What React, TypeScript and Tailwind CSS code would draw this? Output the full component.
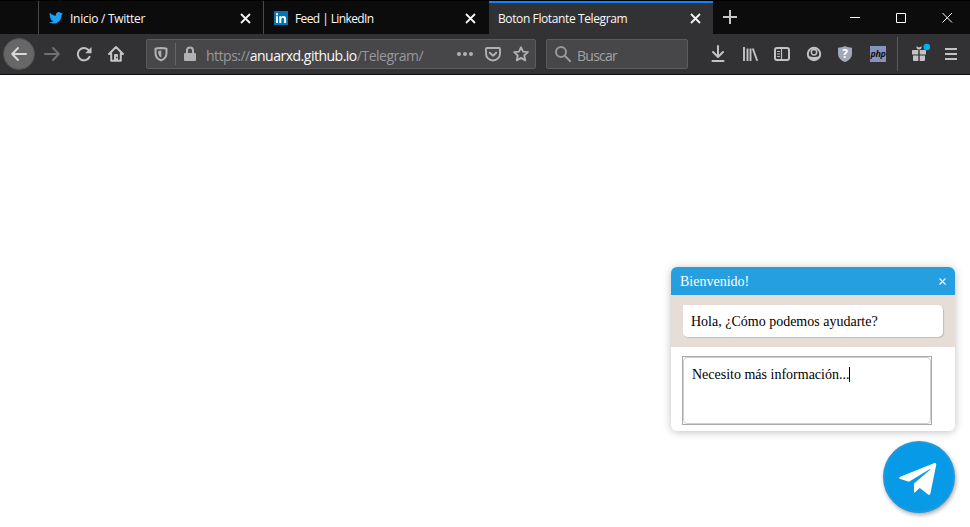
import type { ReactNode } from "react";

const CloseX = () => (
  <svg className="h-[11px] w-[11px] shrink-0" viewBox="0 0 11 11" fill="none" stroke="#f4f4f4" strokeWidth="1.8">
    <path d="M1 1 10 10M10 1 1 10" />
  </svg>
);

const Slot = ({ children }: { children: ReactNode }) => (
  <div className="flex h-8 w-8 shrink-0 items-center justify-center">{children}</div>
);

const Icon = ({ children, color = "#c3c3c3" }: { children: ReactNode; color?: string }) => (
  <svg
    className="h-4 w-4 shrink-0 overflow-visible"
    viewBox="0 0 16 16"
    fill="none"
    stroke={color}
    strokeWidth="2"
    strokeLinecap="round"
    strokeLinejoin="round"
  >
    {children}
  </svg>
);

function TabStrip() {
  return (
    <div className="flex h-[34px] border-t border-black bg-[#0c0c0d] text-[12px] text-[#f9f9fa]">
      <div className="w-[38px] shrink-0" />
      <div className="flex w-[225px] shrink-0 items-center border-l border-[#4a4a4b] pt-px pl-[10px] pr-[12px]">
        <svg className="h-[14px] w-[14px] shrink-0" viewBox="0 2 24 20.5" fill="#1da1f2">
          <path d="M23.954 4.569a10 10 0 0 1-2.825.775 4.958 4.958 0 0 0 2.163-2.723c-.951.555-2.005.959-3.127 1.184a4.92 4.92 0 0 0-8.384 4.482C7.691 8.094 4.066 6.13 1.64 3.161a4.822 4.822 0 0 0-.666 2.475c0 1.71.87 3.213 2.188 4.096a4.904 4.904 0 0 1-2.228-.616v.061a4.923 4.923 0 0 0 3.946 4.827 4.996 4.996 0 0 1-2.212.085 4.937 4.937 0 0 0 4.604 3.417 9.868 9.868 0 0 1-6.102 2.105c-.39 0-.779-.023-1.17-.067a13.995 13.995 0 0 0 7.557 2.209c9.054 0 13.999-7.496 13.999-13.986 0-.209 0-.42-.015-.63a9.936 9.936 0 0 0 2.46-2.548z" />
        </svg>
        <span className="ml-[7px] flex-1 whitespace-nowrap pt-[2px] tracking-[-0.27px]">Inicio / Twitter</span>
        <CloseX />
      </div>
      <div className="flex w-[226px] shrink-0 items-center border-l border-[#4a4a4b] pt-px pl-[10px] pr-[13px]">
        <svg className="h-[14px] w-[14px] shrink-0" viewBox="0 0 14 14">
          <rect width="14" height="14" fill="#0077b5" />
          <path d="M2 5.3h2V12H2zM2 2.2h2v2H2zM5.3 5.3h2v.9c.5-.8 1.2-1.1 2.2-1.1 1.9 0 2.6 1.2 2.6 3.1V12h-2V8.6c0-1.1-.3-1.8-1.3-1.8S7.3 7.6 7.3 8.6V12h-2z" fill="#fff" />
        </svg>
        <span className="ml-[7px] flex-1 whitespace-nowrap pt-[2px] tracking-[-0.6px]">Feed | LinkedIn</span>
        <CloseX />
      </div>
      <div className="flex w-[224px] shrink-0 items-center border-t-2 border-[#0a84ff] bg-[#323234] pl-[9px] pr-[12px]">
        <span className="flex-1 whitespace-nowrap pt-px tracking-[-0.39px]">Boton Flotante Telegram</span>
        <CloseX />
      </div>
      <div className="flex w-[34px] items-center justify-center pb-px">
        <svg className="h-[14px] w-[14px]" viewBox="0 0 14 14" stroke="#c8c8c8" strokeWidth="2">
          <path d="M7 0v14M0 7h14" />
        </svg>
      </div>
      <div className="ml-auto flex items-center">
        <div className="flex w-[46px] justify-center">
          <svg className="h-[11px] w-[11px]" viewBox="0 0 11 11"><path d="M0 5.500h10" stroke="#fff" /></svg>
        </div>
        <div className="flex w-[46px] justify-center">
          <svg className="h-[11px] w-[11px]" viewBox="0 0 11 11"><path d="M.5 1.500h9v9h-9z" fill="none" stroke="#fff" /></svg>
        </div>
        <div className="flex w-[46px] justify-center">
          <svg className="h-[11px] w-[11px]" viewBox="0 0 11 11"><path d="m.5 1 9.500 9.500M10 1 .5 10.500" stroke="#fff" /></svg>
        </div>
      </div>
    </div>
  );
}

function UrlBar() {
  return (
    <div className="ml-[14px] flex h-[30px] w-[390px] shrink-0 items-center rounded-[2px] border border-[#5b5b5d] bg-[#474749] pl-[6px]">
      <Icon color="#b1b1b3">
        <path d="M8 2C6 2.100 3.900 2.300 2.500 2.800V7c0 3.300 2.200 6.300 5.500 7.300C11.300 13.300 13.500 10.300 13.500 7V2.800C12.100 2.300 10 2.100 8 2Z" />
        <path d="M8.300 4.600v7C6.300 10.600 5.200 8.800 5.200 6.500V5Z" fill="#b1b1b3" stroke="none" />
      </Icon>
      <div className="ml-[6px] h-[22px] w-px bg-[#66666a]" />
      <div className="ml-[6px] flex">
        <Icon color="#b1b1b3">
          <rect x="2" y="7" width="12" height="8" rx="1" fill="#b1b1b3" stroke="none" />
          <path d="M5 8V4.500a3 3 0 0 1 6 0V8" />
        </Icon>
      </div>
      <span className="ml-[8px] w-[242px] whitespace-nowrap pt-[2px] text-[14px] tracking-[-0.5px] text-[#98989a]">
        https://<span className="text-[#f9f9fa]">anuarxd.github.io</span>/Telegram/
      </span>
      <div className="flex w-[81px] justify-between pl-[9px]">
        <Icon color="#b1b1b3">
          <g fill="#b1b1b3" stroke="none">
            <circle cx="2" cy="8" r="2" /><circle cx="8" cy="8" r="2" /><circle cx="14" cy="8" r="2" />
          </g>
        </Icon>
        <Icon color="#b1b1b3">
          <path d="M1.900 2h12.200a.9.9 0 0 1 .9.900V7.500a7 7 0 0 1-14 0V2.900A.9.9 0 0 1 1.900 2Z" strokeWidth="1.900" />
          <path d="m4.800 6.700 3.200 3 3.200-3" strokeWidth="1.900" />
        </Icon>
        <Icon color="#b1b1b3">
          <path d="m8 1.200 2 4.500 4.900.5-3.700 3.300 1.100 4.900L8 11.900l-4.300 2.500 1.100-4.900-3.700-3.300 4.900-.5Z" strokeWidth="1.800" />
        </Icon>
      </div>
    </div>
  );
}

function Toolbar() {
  return (
    <div className="flex h-[41px] items-center border-b border-[#0c0c0d] bg-[#323234] pl-[3px]">
      <div className="flex h-8 w-8 shrink-0 items-center justify-center rounded-full border border-[#505052] bg-[#676768]">
        <Icon color="#d8d8d8"><path d="M15 8H1.500M7 2 1.200 8 7 14" /></Icon>
      </div>
      <div className="ml-px flex">
        <Slot><Icon color="#707072"><path d="M1 8h13.500M9 2l5.800 6L9 14" /></Icon></Slot>
        <Slot>
          <Icon>
            <path d="M13.600 10.800A6.200 6.200 0 1 1 12.700 4.100" />
            <path d="M15.500 1v6.300H9.200Z" fill="#c3c3c3" stroke="none" />
          </Icon>
        </Slot>
        <Slot>
          <Icon>
            <path d="m1 8 7-7 7 7M3.200 7v7.800h9.600V7" />
            <path d="M7 8h2a1 1 0 0 1 1 1v6H6V9a1 1 0 0 1 1-1Z" fill="#c3c3c3" stroke="none" />
            <circle cx="8.700" cy="11.500" r=".8" fill="#323234" stroke="none" />
          </Icon>
        </Slot>
      </div>
      <UrlBar />
      <div className="ml-[10px] flex h-[30px] w-[142px] shrink-0 items-center rounded-[2px] border border-[#5b5b5d] bg-[#474749] pl-2 text-[14px] text-[#a2a2a4]">
        <Icon color="#98989a"><circle cx="6" cy="6" r="5" /><path d="m9.800 9.800 5.400 5.400" /></Icon>
        <span className="ml-[6px] pt-[2px] tracking-[-0.75px]">Buscar</span>
      </div>
      <div className="ml-[14px] flex items-center">
        <Slot><Icon><path d="M8 0v10.500M3 6l5 5 5-5M2.500 15h11" /></Icon></Slot>
        <Slot><Icon><path d="M2 1v14M5.500 2.500V15M8.500 2.500V15M10.800 2.500 15.200 14.800" strokeWidth="1.900" strokeLinecap="butt" /></Icon></Slot>
        <Slot>
          <Icon>
            <rect x="1" y="2" width="14" height="12" rx="2" />
            <path d="M7.500 2v12" strokeWidth="1.200" />
            <path d="M3.500 5.500h2M3.500 8h2M3.500 10.500h2" strokeWidth="1" />
          </Icon>
        </Slot>
        <Slot>
          <Icon>
            <circle cx="8" cy="8" r="6.200" />
            <circle cx="8" cy="6.300" r="2.700" strokeWidth="1.500" />
            <path d="M3 9.800c1.300 1 2.900 1.300 5 1.300s3.700-.3 5-1.300L11.500 13 8 14.500 4.500 13Z" fill="#c3c3c3" stroke="none" />
          </Icon>
        </Slot>
        <div className="-ml-px flex">
          <Slot>
            <div className="relative flex h-4 w-4 items-center justify-center">
              <svg className="h-4 w-4 overflow-visible" viewBox="0 0 16 16">
                <path d="M8 0c2.200 1 4.500 1.500 7 1.700v6C15 11.400 12.200 14.500 8 16 3.800 14.500 1 11.400 1 7.700v-6C3.500 1.500 5.800 1 8 0Z" fill="#a3a8b7" />
              </svg>
              <span className="absolute inset-0 text-center text-[12px] font-bold leading-[15px] text-white">?</span>
            </div>
          </Slot>
        </div>
        <div className="ml-px flex">
          <Slot>
            <div className="flex h-4 w-4 items-center justify-center bg-[#8892bf] pb-px text-[9px] font-bold italic leading-none tracking-[-0.3px] text-[#101018]">
              php
            </div>
          </Slot>
        </div>
        <div className="ml-[3px] h-[34px] w-px bg-[#5b5b5d]" />
        <div className="ml-[5px] flex">
          <Slot>
            <Icon>
              <g fill="#c3c3c3" stroke="none">
                <path d="M2 4h5.300V8.500H1V5a1 1 0 0 1 1-1ZM8.700 4H14a1 1 0 0 1 1 1v3.500H8.700ZM2 9.500h5.300V15H3a1 1 0 0 1-1-1ZM8.700 9.500H14V14a1 1 0 0 1-1 1H8.700Z" />
                <path d="M5.500.3 8 1.500 10.500.3v2L9 3.500H7L5.500 2.300Z" />
                <circle cx="15.800" cy="1" r="3.300" fill="#00b3f4" />
              </g>
            </Icon>
          </Slot>
          <Slot><Icon><path d="M2 3h12M2 8h12M2 13h12" strokeLinecap="butt" /></Icon></Slot>
        </div>
      </div>
    </div>
  );
}

function ChatPanel() {
  return (
    <section className="flex h-[164px] w-[284px] flex-col overflow-hidden rounded-[6px] bg-white text-[14px] text-black shadow-[0_1px_9px_rgba(0,0,0,0.25)] [font-family:'Liberation_Serif',serif]">
      <header className="flex h-7 shrink-0 items-center justify-between bg-[#259fdf] pl-[9px] pr-[9px] text-white">
        <span>Bienvenido!</span>
        <svg className="h-[7px] w-[7px]" viewBox="0 0 7 7" stroke="#fff" strokeWidth="1.1">
          <path d="m.5.5 6 6m0-6-6 6" />
        </svg>
      </header>
      <div className="h-[52px] shrink-0 bg-[#e6ddd6] px-3 py-[10px]">
        <p className="h-8 w-[260px] rounded-[5px] rounded-tl-none bg-white pl-2 leading-[34px] shadow-[1px_1px_1px_rgba(0,0,0,0.15)]">
          Hola, ¿Cómo podemos ayudarte?
        </p>
      </div>
      <div className="ml-[11px] mt-[9px] h-[69px] w-[250px] border border-[#a9a9ad] bg-white">
        <div className="flex h-full w-full items-start rounded-[4px] border border-[#cfcfd2] pl-2 pt-[8px] leading-[18px]">
          <span>Necesito más información...</span>
          <span className="mt-[1px] h-[15px] w-px bg-black" />
        </div>
      </div>
    </section>
  );
}

export default function App() {
  return (
    <div className="flex h-[527px] w-[970px] flex-col overflow-hidden bg-white [font-family:'Open_Sans','Noto_Sans',sans-serif]">
      <TabStrip />
      <Toolbar />
      <main className="flex flex-1 flex-col items-end justify-end gap-[10px] pb-[14px] pr-[15px]">
        <ChatPanel />
        <button className="flex h-[72px] w-[72px] items-center justify-center rounded-full border-2 border-[#2298dd] bg-[#069ae7] pr-[3px] pt-1 shadow-[1px_2px_4px_rgba(0,0,0,0.35)]">
          <svg className="h-[32px] w-[38px] shrink-0 overflow-visible" viewBox="0 0 38 32" fill="#fff">
            <path d="M35.500.1 1.200 13.700c-1.500.7-1.400 1.700.1 2.200L10 18.800 30.500 6.300c.8-.4 1.100 0 .5.500L15 20.500v9.200c.6 0 .9-.3 1.300-.7l4.500-4 8.300 6.600c1.100.7 2 .3 2.300-1.100L37.200 2C37.500.4 36.700-.4 35.500.1Z" />
          </svg>
        </button>
      </main>
    </div>
  );
}
